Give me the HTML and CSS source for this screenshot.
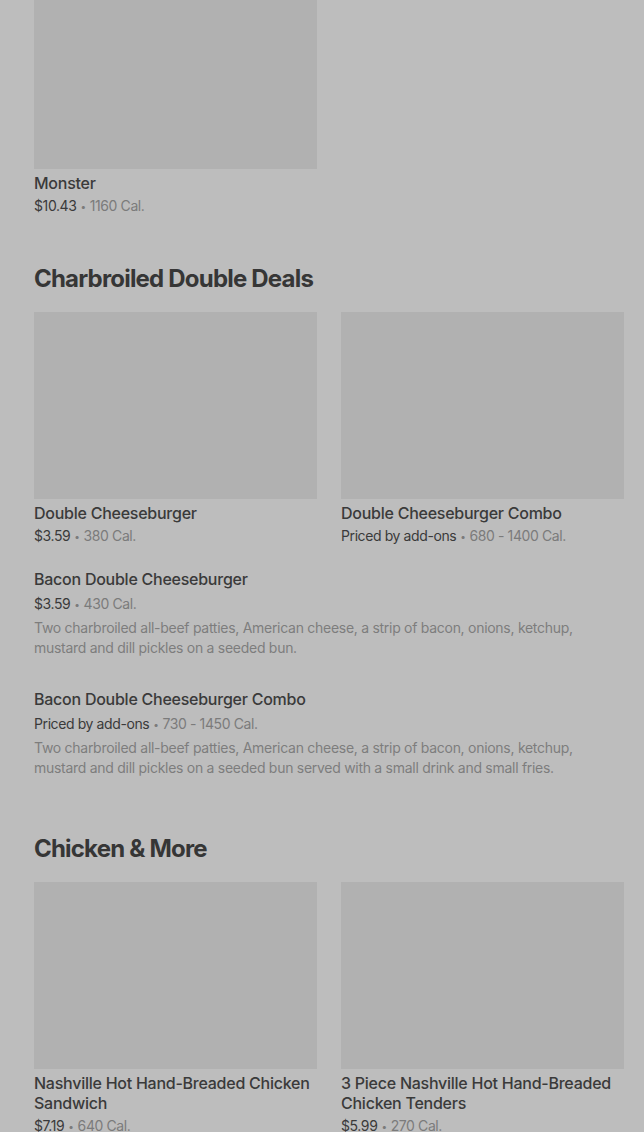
FILE: index.html
```html
<!DOCTYPE html>
<html lang="en">
<head>
<meta charset="utf-8">
<link rel="stylesheet" href="styles.css">
</head>
<body>
<main class="menu">
  <section class="section first">
    <div class="grid">
      <div class="card">
        <div class="thumb"></div>
        <div class="name">Monster</div>
        <div class="meta"><span class="price">$10.43</span><span class="dot">•</span>1160 Cal.</div>
      </div>
    </div>
  </section>

  <section class="section">
    <h2 class="heading">Charbroiled Double Deals</h2>
    <div class="grid">
      <div class="card">
        <div class="thumb"></div>
        <div class="name">Double Cheeseburger</div>
        <div class="meta"><span class="price">$3.59</span><span class="dot">•</span>380 Cal.</div>
      </div>
      <div class="card">
        <div class="thumb"></div>
        <div class="name">Double Cheeseburger Combo</div>
        <div class="meta"><span class="price">Priced by add-ons</span><span class="dot">•</span>680 - 1400 Cal.</div>
      </div>
    </div>
    <div class="item">
      <div class="name">Bacon Double Cheeseburger</div>
      <div class="meta"><span class="price">$3.59</span><span class="dot">•</span>430 Cal.</div>
      <p class="desc">Two charbroiled all-beef patties, American cheese, a strip of bacon, onions, ketchup, mustard and dill pickles on a seeded bun.</p>
    </div>
    <div class="item">
      <div class="name">Bacon Double Cheeseburger Combo</div>
      <div class="meta"><span class="price">Priced by add-ons</span><span class="dot">•</span>730 - 1450 Cal.</div>
      <p class="desc">Two charbroiled all-beef patties, American cheese, a strip of bacon, onions, ketchup, mustard and dill pickles on a seeded bun served with a small drink and small fries.</p>
    </div>
  </section>

  <section class="section">
    <h2 class="heading">Chicken &amp; More</h2>
    <div class="grid">
      <div class="card">
        <div class="thumb"></div>
        <div class="name">Nashville Hot Hand-Breaded Chicken Sandwich</div>
        <div class="meta"><span class="price">$7.19</span><span class="dot">•</span>640 Cal.</div>
      </div>
      <div class="card">
        <div class="thumb"></div>
        <div class="name">3 Piece Nashville Hot Hand-Breaded Chicken Tenders</div>
        <div class="meta"><span class="price">$5.99</span><span class="dot">•</span>270 Cal.</div>
      </div>
    </div>
  </section>
</main>
</body>
</html>
```

FILE: styles.css
```css
html, body {
  margin: 0;
  padding: 0;
  background: #bdbdbd;
  overflow: hidden;
}
body {
  font-family: "Inter", "Liberation Sans", sans-serif;
  color: #3a3a3a;
}
.menu {
  padding: 0 20px 0 34px;
  margin-top: -18px;
}
.section {
  margin-top: 47px;
}
.section.first {
  margin-top: 0;
}
.heading {
  margin: 0 0 17px;
  font-size: 24px;
  line-height: 32px;
  font-weight: 700;
  letter-spacing: -0.8px;
  color: #363636;
}
.grid {
  display: grid;
  grid-template-columns: 283px 283px;
  column-gap: 24px;
}
.thumb {
  height: 187px;
  background: #b1b1b1;
  margin-bottom: 4px;
}
.name {
  font-size: 16px;
  line-height: 20px;
  font-weight: 500;
  letter-spacing: -0.25px;
  color: #3a3a3a;
}
.meta {
  margin-top: 3px;
  font-size: 14px;
  line-height: 20px;
  letter-spacing: -0.4px;
  color: #7b7b7b;
}
.price {
  color: #3a3a3a;
}
.dot {
  display: inline-block;
  font-size: 10px;
  margin: 0 4px;
  vertical-align: 1px;
}
.item {
  padding: 23px 0 8px;
}
.item .meta {
  margin-top: 5px;
}
.desc {
  margin: 4px 0 0;
  font-size: 14px;
  line-height: 20px;
  letter-spacing: -0.28px;
  color: #7d7d7d;
}
```
